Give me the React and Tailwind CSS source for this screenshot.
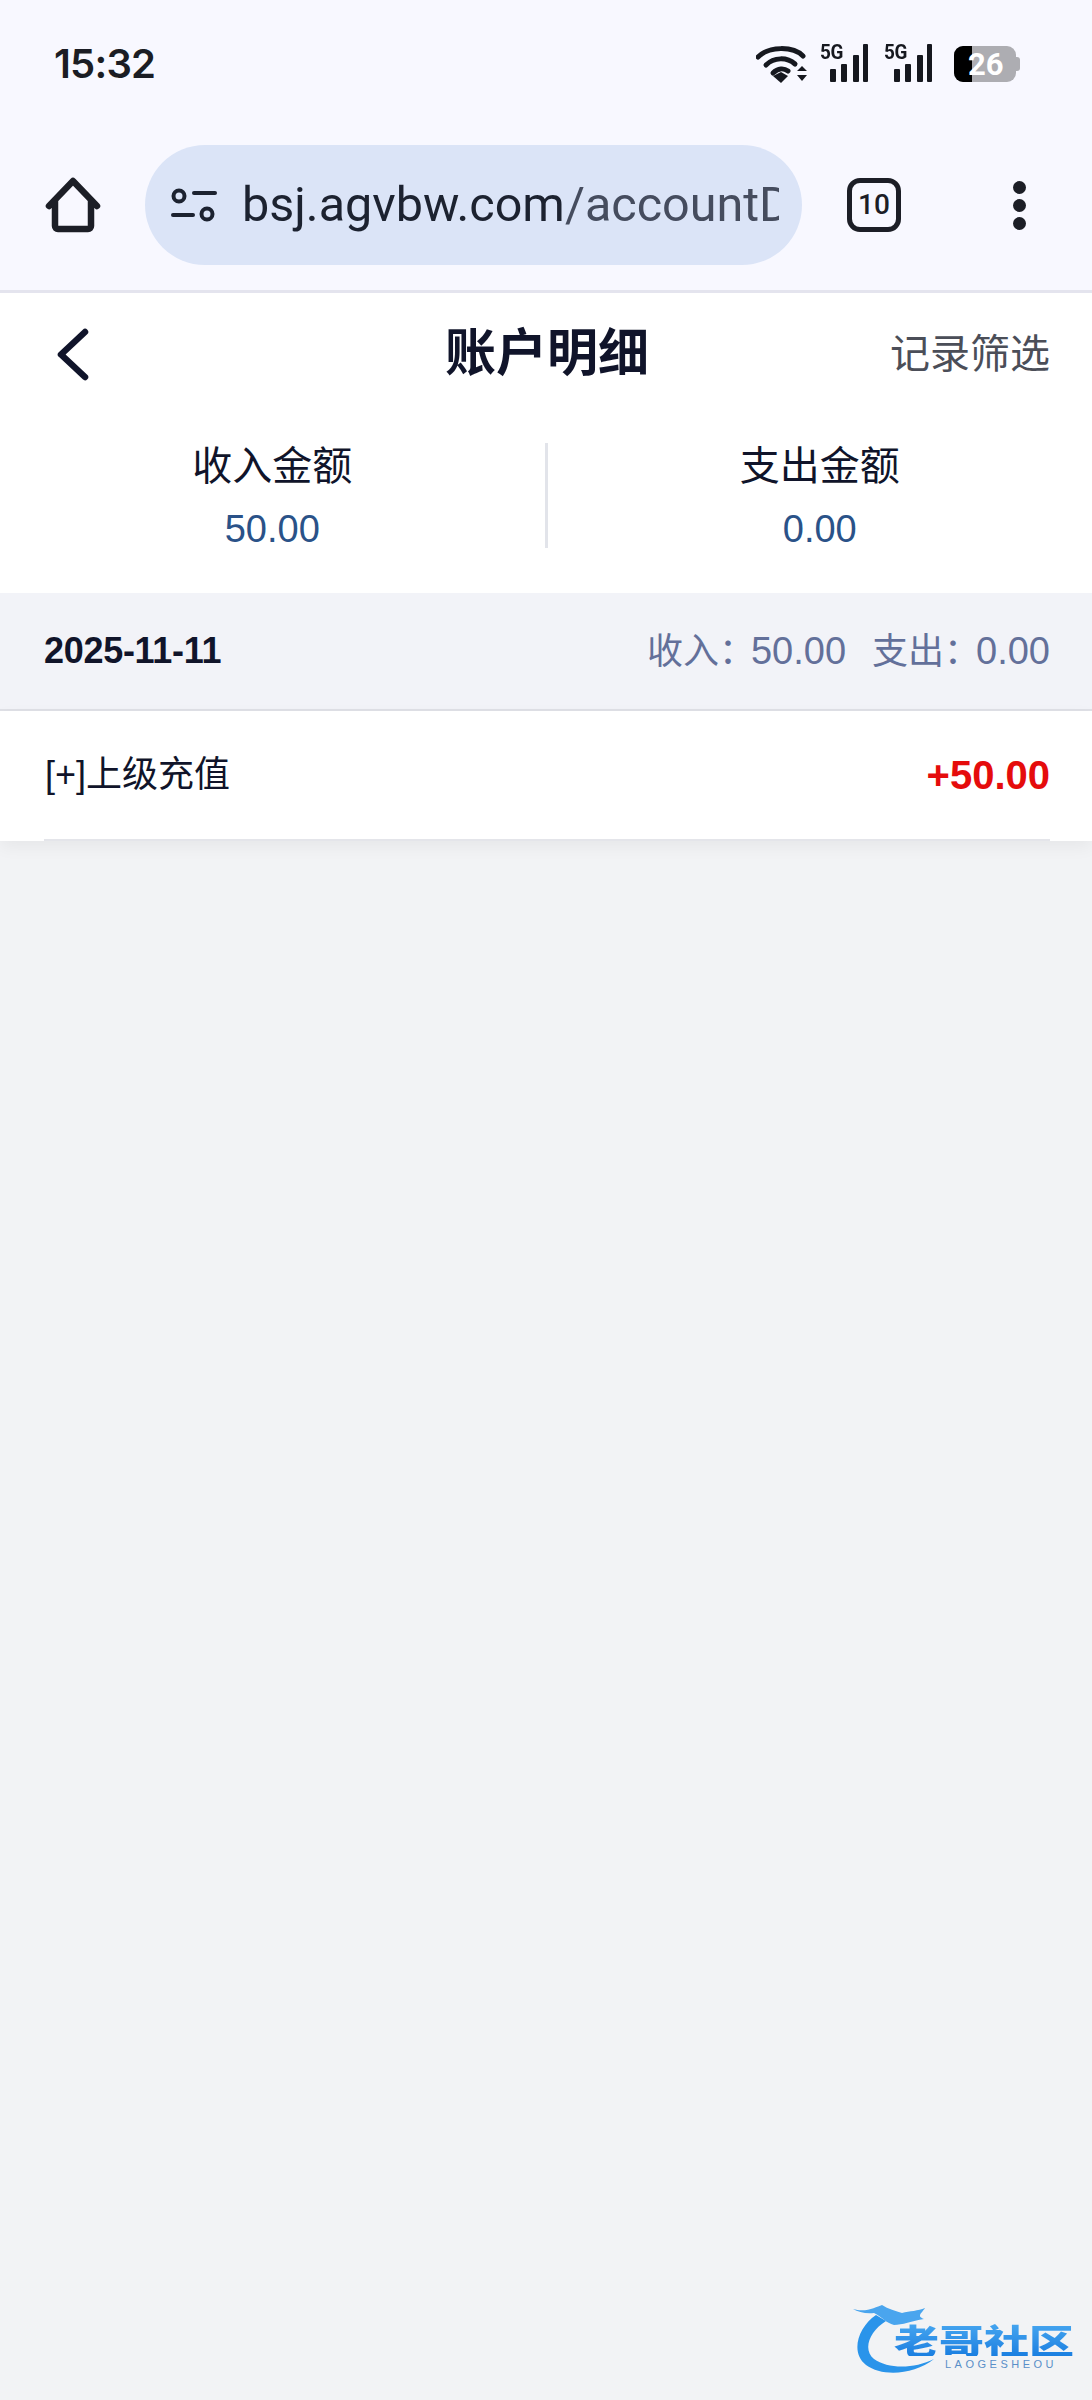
import React from "react";

const cjk = "font-['Liberation_Sans','Noto_Sans_CJK_SC',sans-serif]";

function SignalIcon() {
  return (
    <div className="relative w-[48px] h-[40px]">
      <span className="absolute left-[-3px] top-[-3px] font-['Roboto',sans-serif] font-bold text-[21px] leading-[22px] text-[#16181f] tracking-[-0.5px] scale-x-90 origin-left">
        5G
      </span>
      <svg width="48" height="40" viewBox="0 0 48 40" className="absolute left-0 top-0">
        <rect x="7" y="25" width="6" height="13" rx="1" fill="#16181f" />
        <rect x="18" y="20" width="6" height="18" rx="1" fill="#16181f" />
        <rect x="30" y="11" width="6" height="27" rx="1" fill="#16181f" />
        <rect x="40" y="0" width="5" height="38" rx="1" fill="#16181f" />
      </svg>
    </div>
  );
}

function StatusBar() {
  return (
    <div className="h-[128px] flex items-center justify-between pl-[54px] pr-[72px]">
      <span className="font-['Inter',sans-serif] font-semibold text-[40px] leading-none text-[#1b1d24] tracking-[-0.8px]">
        15:32
      </span>
      <div className="flex items-center">
        <svg width="52" height="40" viewBox="0 0 52 40" fill="none">
          <path d="M2 13 C13 2 37 2 47 12" stroke="#16181f" strokeWidth="5" strokeLinecap="round" />
          <path d="M10 21 C18 13 31 13 39 20" stroke="#16181f" strokeWidth="5" strokeLinecap="round" />
          <path d="M17 29 C22 24 28 24 32 27" stroke="#16181f" strokeWidth="5" strokeLinecap="round" />
          <path d="M17 32 L25 28 L32 32 L25 39 Z" fill="#16181f" />
          <path d="M46 22 L51 27 L41 27 Z M41 31 L51 31 L46 37 Z" fill="#16181f" />
        </svg>
        <div className="ml-[15px]">
          <SignalIcon />
        </div>
        <div className="ml-[16px]">
          <SignalIcon />
        </div>
        <div className="ml-[19px] relative w-[66px] h-[36px]">
          <div className="absolute left-0 top-0 w-[62px] h-[36px] rounded-[9px] bg-[#adadb2] overflow-hidden">
            <div className="w-[18px] h-full bg-black"></div>
          </div>
          <div className="absolute right-0 top-[11px] w-[4px] h-[14px] rounded-r-[3px] bg-[#adadb2]"></div>
          <span className="absolute left-[14px] top-[1px] font-['Roboto',sans-serif] font-bold text-[31px] leading-[36px] text-white">
            26
          </span>
        </div>
      </div>
    </div>
  );
}

function Toolbar() {
  return (
    <div className="pt-[17px] flex items-start">
      <div className="w-[145px] h-[120px] flex items-center justify-center">
        <svg width="60" height="60" viewBox="0 0 60 60" fill="none">
          <path
            d="M6 31 L30 6 L54 31 M12 26 V51 a3 3 0 0 0 3 3 H45 a3 3 0 0 0 3 -3 V26"
            stroke="#1c1e26"
            strokeWidth="6.5"
            strokeLinecap="round"
            strokeLinejoin="round"
          />
        </svg>
      </div>
      <div className="w-[657px] h-[120px] rounded-full bg-[#dbe4f7] flex items-center pl-[26px]">
        <svg width="46" height="42" viewBox="0 0 46 42" fill="none" className="shrink-0">
          <circle cx="8" cy="12" r="5.5" stroke="#1c2230" strokeWidth="4" />
          <path d="M23 9 H44" stroke="#1c2230" strokeWidth="4" strokeLinecap="round" />
          <path d="M2 31 H22" stroke="#1c2230" strokeWidth="4" strokeLinecap="round" />
          <circle cx="36" cy="30" r="5.5" stroke="#1c2230" strokeWidth="4" />
        </svg>
        <div className="ml-[25px] w-[537px] overflow-hidden whitespace-nowrap font-['Roboto',sans-serif] text-[48.5px] leading-[60px]">
          <span className="text-[#1c2230]">bsj.agvbw.com</span>
          <span className="text-[#454c5e]">/accountDetail</span>
        </div>
      </div>
      <div className="w-[144px] h-[120px] flex items-center justify-center">
        <div className="w-[54px] h-[54px] rounded-[13px] border-[5px] border-[#1c1e26] flex items-center justify-center font-['Roboto',sans-serif] font-medium text-[28px] leading-none text-[#1c1e26]">
          10
        </div>
      </div>
      <div className="flex-1 h-[120px] flex flex-col items-center justify-center gap-[5px]">
        <span className="w-[13px] h-[13px] rounded-full bg-[#1c1e26]"></span>
        <span className="w-[13px] h-[13px] rounded-full bg-[#1c1e26]"></span>
        <span className="w-[13px] h-[13px] rounded-full bg-[#1c1e26]"></span>
      </div>
    </div>
  );
}

function Stat({ label, value }) {
  return (
    <div className="flex-1 flex flex-col items-center">
      <span className="text-[40px] leading-[50px] text-[#10142a]">{label}</span>
      <span className="mt-[16px] text-[38px] leading-[44px] text-[#2a5288]">{value}</span>
    </div>
  );
}

function Logo() {
  return (
    <div className="absolute left-[852px] top-[2303px] w-[226px] h-[76px]">
      <svg width="226" height="76" viewBox="0 0 226 76" fill="none" className="absolute left-0 top-0 blur-[0.6px]">
        <path d="M24 12 C6 24 -2 50 14 62 C30 74 62 72 82 56 C62 66 36 66 22 56 C10 46 18 28 34 18 Z" fill="#2a94ea" />
        <path
          d="M1 6 C14 10 24 4 30 2 C36 6 44 8 50 10 C58 8 66 8 73 5 C70 10 64 13 72 16 C60 18 50 22 42 22 C34 20 30 14 22 10 C14 11 6 9 1 6 Z"
          fill="#4aa5ee"
        />
      </svg>
      <div className="absolute left-[42px] top-[20px] whitespace-nowrap font-['Noto_Sans_CJK_SC',sans-serif] font-black text-[45px] leading-[44px] origin-top scale-y-75 text-transparent bg-clip-text bg-gradient-to-b from-[#46a6f0] to-[#1a7fe0]">
        老哥社区
      </div>
      <div className="absolute left-[93px] top-[56px] whitespace-nowrap font-['Liberation_Sans',sans-serif] text-[11px] leading-[10px] tracking-[3.5px] text-[#5a8fc8]">
        LAOGESHEOU
      </div>
    </div>
  );
}

export default function App() {
  return (
    <div className={`relative h-[2400px] overflow-hidden bg-[#f2f3f5] ${cjk}`}>
      {/* Browser chrome */}
      <div className="h-[293px] bg-[#f8f8ff] border-b-[3px] border-[#e4e4ee]">
        <StatusBar />
        <Toolbar />
      </div>

      {/* Page header */}
      <div className="bg-white">
        <div className="h-[122px] flex items-center pl-[44px] pr-[42px]">
          <div className="flex-1">
            <svg width="60" height="60" viewBox="0 0 60 60" fill="none">
              <path d="M41 8 L17 30.5 L41 53" stroke="#10142a" strokeWidth="6.5" strokeLinecap="round" strokeLinejoin="round" />
            </svg>
          </div>
          <span className="text-[51px] leading-[60px] font-bold text-[#10142a]">账户明细</span>
          <div className="flex-1 flex justify-end">
            <span className="text-[40px] leading-[50px] text-[#4b4e58]">记录筛选</span>
          </div>
        </div>

        {/* Totals */}
        <div className="flex pt-[26px] h-[178px]">
          <Stat label="收入金额" value="50.00" />
          <div className="w-[3px] h-[105px] mt-[2px] bg-[#e2e4ea]"></div>
          <Stat label="支出金额" value="0.00" />
        </div>
      </div>

      {/* Day summary */}
      <div className="h-[118px] flex items-center justify-between pl-[44px] pr-[42px] bg-[#f2f3f8] border-b-[2px] border-[#dfe0e6]">
        <span className="text-[36px] font-bold text-[#10142a] tracking-[-0.3px]">2025-11-11</span>
        <div className="flex items-center gap-[26px] text-[36px] text-[#63709a]">
          <span>收入：<span className="text-[38px] ml-[-4px]">50.00</span></span>
          <span>支出：<span className="text-[38px] ml-[-4px]">0.00</span></span>
        </div>
      </div>

      {/* Record */}
      <div className="bg-white pl-[44px] pr-[42px] shadow-[0_6px_16px_rgba(0,0,0,0.05)]">
        <div className="h-[130px] flex items-center justify-between border-b-[2px] border-[#e4e5ea]">
          <span className="text-[36px] text-[#10142a] ml-[1px]">[+]上级充值</span>
          <span className="text-[40px] font-bold text-[#e50c0c]">+50.00</span>
        </div>
      </div>

      <Logo />
    </div>
  );
}
